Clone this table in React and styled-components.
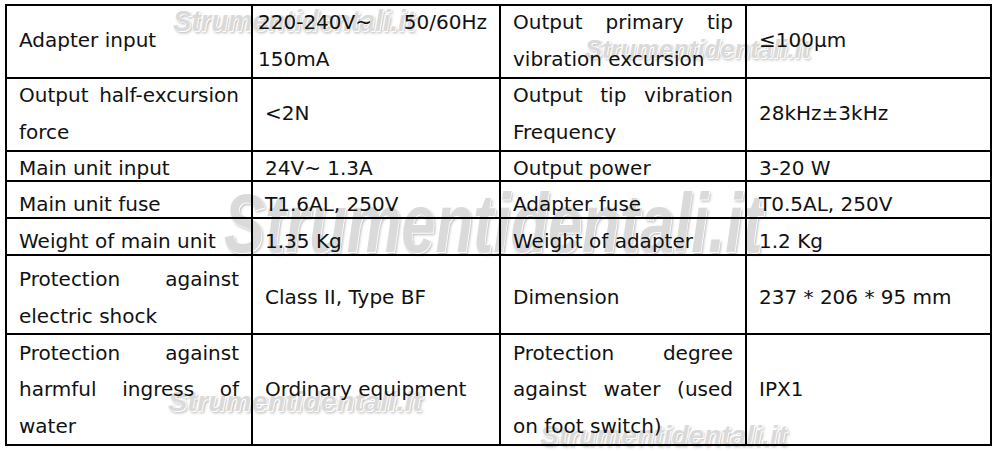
import styled, { createGlobalStyle } from 'styled-components';

const GlobalStyle = createGlobalStyle`
    body {
        margin: 0;
        background: #fff;
    }
`;

// h = row pitch in px, shift = how far the text sits below the cell middle
const rows = [
    { h: 73, shift: -1, cells: [['Adapter input'], ['220-240V~ 50/60Hz', '150mA'], ['Output primary tip', 'vibration excursion'], ['≤100μm']], tight: 1 },
    { h: 73, shift: -1, cells: [['Output half-excursion', 'force'], ['<2N'], ['Output tip vibration', 'Frequency'], ['28kHz±3kHz']] },
    { h: 30, shift: 2, cells: [['Main unit input'], ['24V~ 1.3A'], ['Output power'], ['3-20 W']] },
    { h: 37, shift: 5, cells: [['Main unit fuse'], ['T1.6AL, 250V'], ['Adapter fuse'], ['T0.5AL, 250V']] },
    { h: 37, shift: 5, cells: [['Weight of main unit'], ['1.35 Kg'], ['Weight of adapter'], ['1.2 Kg']] },
    { h: 79, shift: 3, cells: [['Protection against', 'electric shock'], ['Class II, Type BF'], ['Dimension'], ['237 * 206 * 95 mm']] },
    { h: 111, shift: 0, cells: [['Protection against', 'harmful ingress of', 'water'], ['Ordinary equipment'], ['Protection degree', 'against water (used', 'on foot switch)'], ['IPX1']] },
];

const marks = [
    { left: 173, top: 10, width: 242, cap: 21 },
    { left: 585, top: 39, width: 225, cap: 19 },
    { left: 224, top: 193, width: 539, cap: 60 },
    { left: 168, top: 392, width: 254, cap: 20 },
    { left: 540, top: 426, width: 247, cap: 20 },
];

const Page = styled.div`
    position: relative;
    padding: 4px 0 0 5px;
    width: 996px;
    height: 451px;
    box-sizing: border-box;
    overflow: hidden;
`;

const Table = styled.table`
    position: relative;
    z-index: 1;
    border-collapse: collapse;
    table-layout: fixed;
    width: 985px;
    font-family: "DejaVu Sans", "Open Sans", sans-serif;
    font-size: 20px;
    color: #111;
    td {
        border: 2px solid #000;
    }
`;

const Cell = styled.td`
    padding: 0 12px 0 ${(p) => (p.$tight ? 5 : 12)}px;
    vertical-align: middle;
`;

const Stack = styled.div`
    box-sizing: border-box;
    height: ${(p) => p.$h - 2}px;
    padding-top: ${(p) => Math.max(p.$shift, 0) * 2}px;
    padding-bottom: ${(p) => Math.max(-p.$shift, 0) * 2}px;
    display: flex;
    flex-direction: column;
    justify-content: center;
`;

const Line = styled.span`
    display: block;
    flex: none;
    height: 36.5px;
    line-height: 36.5px;
    white-space: nowrap;
    text-align: ${(p) => (p.$spread ? 'justify' : 'left')};
    text-align-last: ${(p) => (p.$spread ? 'justify' : 'left')};
    ${(p) => p.$spread && 'white-space: normal;'}
`;

const Watermark = styled.div`
    position: absolute;
    z-index: 0;
    left: ${(p) => p.$left}px;
    top: ${(p) => p.$top - p.$size * 0.13}px;
    font-family: "Liberation Sans", Arial, sans-serif;
    font-weight: bold;
    font-style: italic;
    font-size: ${(p) => p.$size}px;
    line-height: 1;
    white-space: nowrap;
    color: #d4d4d4;
    text-shadow: -1px -1px 0 #fff, 1px 1px 0 #fff, 2px 2px 3px rgba(0, 0, 0, 0.35);
    opacity: 0.85;
    transform: scaleX(${(p) => p.$scale});
    transform-origin: left top;
    pointer-events: none;
`;

const colWidths = [246, 248, 246, 245];

const App = () => {
    return (
        <Page>
            <GlobalStyle />
            {marks.map((m, i) => {
                const size = m.cap / 0.716;
                return (
                    <Watermark key={i} $left={m.left} $top={m.top} $size={size} $scale={m.width / (8.78 * size)}>
                        Strumentidentali.it
                    </Watermark>
                );
            })}
            <Table>
                <colgroup>
                    {colWidths.map((w, i) => (
                        <col key={i} style={{ width: w }} />
                    ))}
                </colgroup>
                <tbody>
                    {rows.map((row, r) => (
                        <tr key={r}>
                            {row.cells.map((lines, c) => (
                                <Cell key={c} $tight={row.tight && c === 1}>
                                    <Stack $h={row.h} $shift={row.shift}>
                                        {lines.map((text, k) => (
                                            <Line key={k} $spread={k < lines.length - 1}>{text}</Line>
                                        ))}
                                    </Stack>
                                </Cell>
                            ))}
                        </tr>
                    ))}
                </tbody>
            </Table>
        </Page>
    );
};

export default App;
